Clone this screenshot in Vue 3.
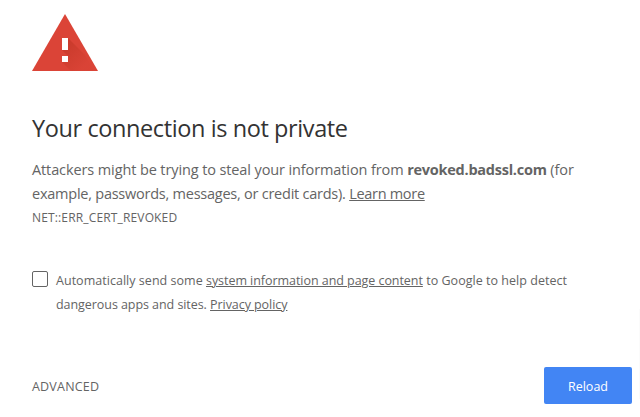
<script setup>
import { ref } from 'vue'

const report = ref(false)
</script>

<template>
  <main class="interstitial">
    <svg class="icon" width="66" height="57" viewBox="0 0 66 57">
      <defs>
        <linearGradient id="shade" gradientUnits="userSpaceOnUse" x1="32" y1="32" x2="52" y2="52">
          <stop offset="0" stop-color="#a52714" stop-opacity=".32" />
          <stop offset="1" stop-color="#a52714" stop-opacity=".03" />
        </linearGradient>
      </defs>
      <path d="M33 0 66 57H0z" fill="#db4437" />
      <path d="M36 24 53 41 62 57H39L30 48 36 42 30 36z" fill="url(#shade)" />
      <path d="M30 24h6v12h-6zM30 42h6v6h-6z" fill="#fff" />
    </svg>
    <h1>Your connection is not private</h1>
    <p class="message">
      <span class="line line-1">Attackers might be trying to steal your information from <strong>revoked.badssl.com</strong> (for</span>
      <span class="line line-2">example, passwords, messages, or credit cards). <a href="#">Learn more</a></span>
    </p>
    <div class="code">NET::ERR_CERT_REVOKED</div>
    <div class="opt-in">
      <input id="report" v-model="report" type="checkbox" />
      <label for="report">
        <span class="line opt-1">Automatically send some <a href="#">system information and page content</a> to Google to help detect</span>
        <span class="line opt-2">dangerous apps and sites. <a href="#">Privacy policy</a></span>
      </label>
    </div>
    <div class="buttons">
      <button class="details">ADVANCED</button>
      <button class="reload">Reload</button>
    </div>
  </main>
</template>

<style>
body {
  margin: 0;
  background: #fff;
}
</style>

<style scoped>
.interstitial {
  box-sizing: border-box;
  width: 640px;
  height: 417px;
  padding: 14px 8px 0 32px;
  overflow: hidden;
  background: linear-gradient(#fbfbfb, #fbfbfb) 639px 309px / 1px 90px no-repeat;
  color: #646464;
  font-family: 'Open Sans', 'Noto Sans', sans-serif;
}
.icon {
  display: block;
}
h1 {
  margin: 41px 0 0;
  color: #333;
  font-size: 23.5px;
  font-weight: 400;
  letter-spacing: -0.4px;
  line-height: 32px;
  white-space: nowrap;
}
.message {
  margin: 14px 0 0;
  font-size: 14.5px;
  line-height: 24px;
}
.line {
  display: block;
  white-space: nowrap;
}
.line-1 {
  letter-spacing: -0.11px;
}
.line-1 strong {
  letter-spacing: -0.25px;
}
.line-2 {
  letter-spacing: -0.24px;
}
.line-2 a {
  letter-spacing: -0.3px;
}
a {
  color: inherit;
}
.code {
  margin-top: 1px;
  font-size: 12px;
  letter-spacing: 0.15px;
  line-height: 22px;
}
.opt-in {
  display: flex;
  gap: 8px;
  margin-top: 40px;
  font-size: 12.5px;
  line-height: 24px;
}
.opt-1 {
  letter-spacing: 0.03px;
}
.opt-1 a {
  letter-spacing: -0.05px;
}
.opt-2 {
  letter-spacing: -0.06px;
}
input {
  appearance: none;
  box-sizing: border-box;
  flex: none;
  width: 16px;
  height: 16px;
  margin: 2px 0 0;
  border: 1px solid #646464;
  border-radius: 2px;
}
.buttons {
  display: flex;
  align-items: center;
  justify-content: space-between;
  margin-top: 50px;
}
button {
  padding: 2px 0 0;
  border: none;
  background: none;
  color: inherit;
  font-family: inherit;
  font-size: 12.5px;
}
.details {
  letter-spacing: 0.2px;
}
.reload {
  width: 88px;
  height: 37px;
  border-radius: 2px;
  background: #4285f4;
  color: #fff;
}
</style>
